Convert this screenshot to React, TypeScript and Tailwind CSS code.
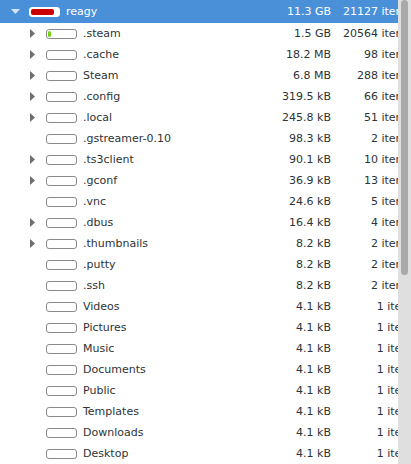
import React from "react";

type Row = {
  name: string;
  size: string;
  items: string;
  expandable: boolean;
  fill?: number;
  fillColor?: string;
};

const rows: Row[] = [
  { name: ".steam", size: "1.5 GB", items: "20564 items", expandable: true, fill: 0.12, fillColor: "bg-[#73d216]" },
  { name: ".cache", size: "18.2 MB", items: "98 items", expandable: true },
  { name: "Steam", size: "6.8 MB", items: "288 items", expandable: true },
  { name: ".config", size: "319.5 kB", items: "66 items", expandable: true },
  { name: ".local", size: "245.8 kB", items: "51 items", expandable: true },
  { name: ".gstreamer-0.10", size: "98.3 kB", items: "2 items", expandable: false },
  { name: ".ts3client", size: "90.1 kB", items: "10 items", expandable: true },
  { name: ".gconf", size: "36.9 kB", items: "13 items", expandable: true },
  { name: ".vnc", size: "24.6 kB", items: "5 items", expandable: false },
  { name: ".dbus", size: "16.4 kB", items: "4 items", expandable: true },
  { name: ".thumbnails", size: "8.2 kB", items: "2 items", expandable: true },
  { name: ".putty", size: "8.2 kB", items: "2 items", expandable: false },
  { name: ".ssh", size: "8.2 kB", items: "2 items", expandable: false },
  { name: "Videos", size: "4.1 kB", items: "1 item", expandable: false },
  { name: "Pictures", size: "4.1 kB", items: "1 item", expandable: false },
  { name: "Music", size: "4.1 kB", items: "1 item", expandable: false },
  { name: "Documents", size: "4.1 kB", items: "1 item", expandable: false },
  { name: "Public", size: "4.1 kB", items: "1 item", expandable: false },
  { name: "Templates", size: "4.1 kB", items: "1 item", expandable: false },
  { name: "Downloads", size: "4.1 kB", items: "1 item", expandable: false },
  { name: "Desktop", size: "4.1 kB", items: "1 item", expandable: false },
];

function Usage({ fill, color, selected }: { fill?: number; color?: string; selected?: boolean }) {
  return (
    <div
      className={`w-[31px] h-[10px] rounded-[3px] border bg-white p-[1px] shrink-0 ${
        selected ? "border-white" : "border-[#8a8a8a]"
      }`}
    >
      {fill ? (
        <div className={`h-full rounded-[2px] ${color}`} style={{ width: `${fill * 100}%` }} />
      ) : null}
    </div>
  );
}

export default function App() {
  return (
    <div
      className="flex w-[411px] h-[464px] bg-white text-[#2e3436] text-[11px] overflow-hidden"
      style={{ fontFamily: '"DejaVu Sans", sans-serif' }}
    >
      <div className="w-[398px] overflow-hidden">
        <div className="w-[412px]">
          <div className="flex items-center h-[23px] bg-[#4a90d9] text-white pl-[8px]">
            <div className="w-[14px] flex justify-center">
              <svg width="9" height="6" viewBox="0 0 9 6">
                <path d="M0 0 L9 0 L4.5 5 Z" fill="#d4e4f6" />
              </svg>
            </div>
            <div className="w-[7px]" />
            <Usage fill={0.85} color="bg-[#cc0000]" selected />
            <span className="ml-[6px] flex-1 pt-[2px]">reagy</span>
            <span className="w-[90px] text-right pt-[2px]">11.3 GB</span>
            <span className="w-[81px] text-right whitespace-nowrap pt-[2px]">21127 items</span>
          </div>
          {rows.map((r) => (
            <div key={r.name} className="flex items-center h-[21px] pl-[26px]">
              <div className="w-[14px] flex justify-center">
                {r.expandable && (
                  <svg width="6" height="9" viewBox="0 0 6 9">
                    <path d="M0 0 L5 4.5 L0 9 Z" fill="#6e6e6e" />
                  </svg>
                )}
              </div>
              <div className="w-[6px]" />
              <Usage fill={r.fill} color={r.fillColor} />
              <span className="ml-[6px] flex-1 whitespace-nowrap pt-[2px]">{r.name}</span>
              <span className="w-[90px] text-right pt-[2px]">{r.size}</span>
              <span className="w-[81px] text-right whitespace-nowrap pt-[2px]">{r.items}</span>
            </div>
          ))}
        </div>
      </div>
      <div className="w-[13px] bg-[#dfdfdf] flex justify-center">
        <div className="w-[7px] h-[275px] rounded-full bg-[#a9a9a9]" />
      </div>
    </div>
  );
}
